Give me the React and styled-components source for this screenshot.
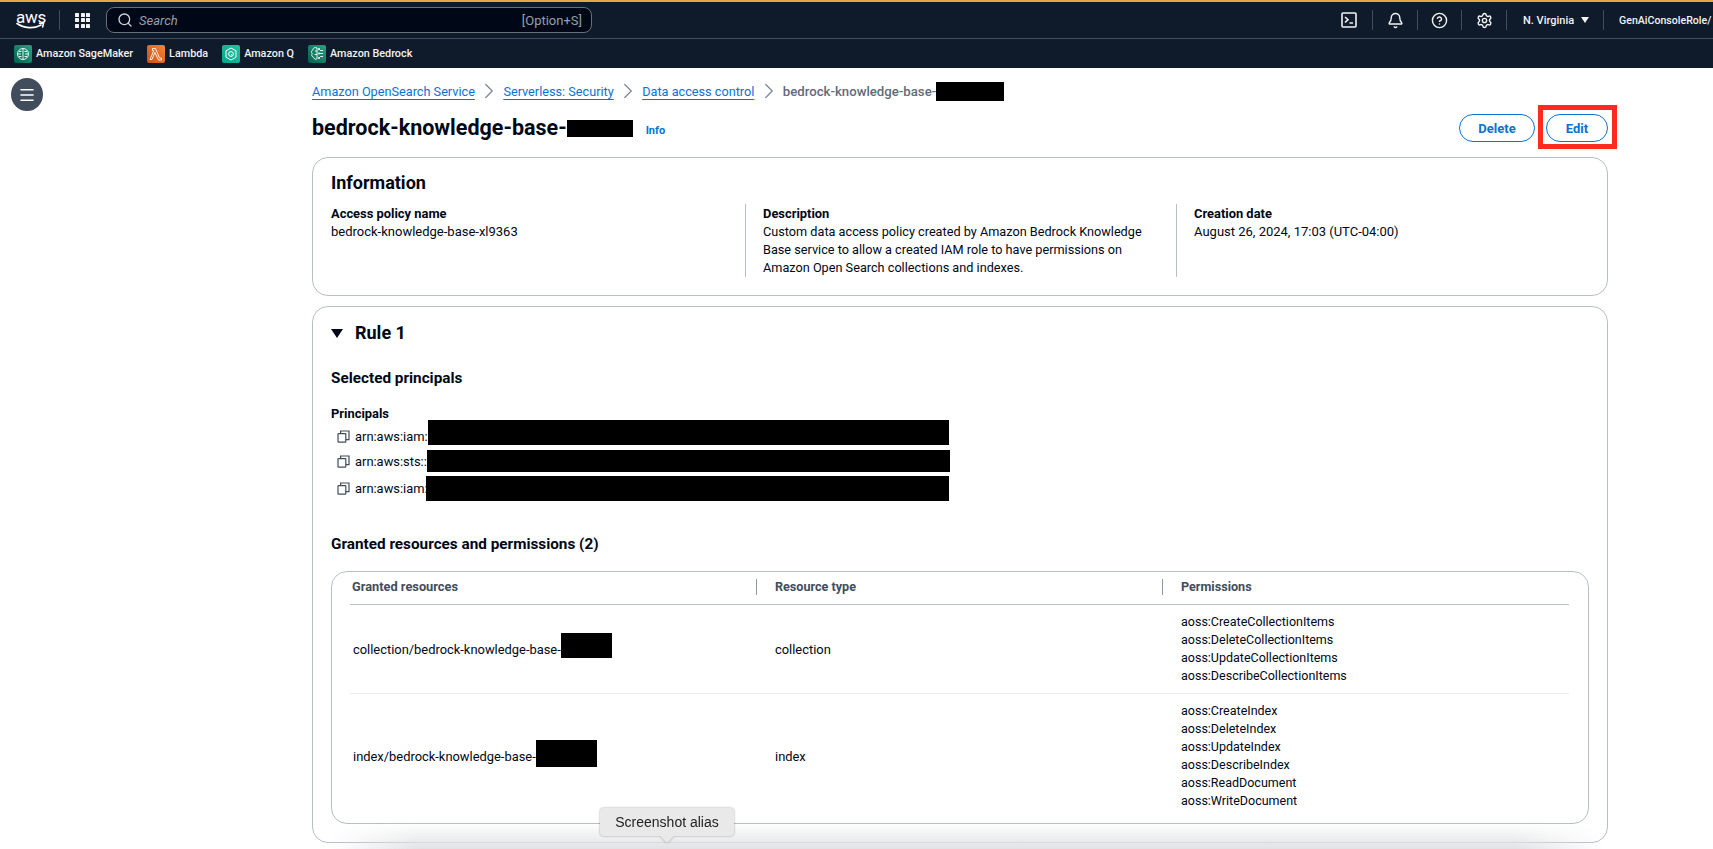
import React from "react";
import styled, { createGlobalStyle } from "styled-components";
import { Bell, CircleHelp, Settings, Search, Menu, ChevronRight } from "lucide-react";

const GlobalStyle = createGlobalStyle`
  html, body {
    margin: 0;
    height: 100%;
    overflow: hidden;
    background: #fff;
  }
  body {
    font-family: Roboto, "Liberation Sans", Arial, sans-serif;
    font-size: 12.9px;
    color: #000716;
  }
`;

const Page = styled.div`
  position: relative;
  width: 1713px;
  height: 849px;
  overflow: hidden;
`;

const TopBar = styled.header`
  height: 38px;
  box-sizing: border-box;
  border-top: 2px solid #e6a54a;
  background: #0f1b2a;
  display: flex;
  align-items: center;
  color: #f2f3f3;
`;
const Logo = styled.div`
  width: 59px;
  box-sizing: border-box;
  padding-left: 16px;
  display: flex;
  flex-direction: column;
  align-items: flex-start;
  line-height: 14px;
  font-size: 17px;
  letter-spacing: -0.2px;
  color: #fff;
  svg { display: block; margin-top: -2px; }
`;
const NavDivider = styled.span`
  width: 1px;
  height: 20px;
  background: #414d5c;
  flex: none;
`;
const GridDots = styled.div`
  display: grid;
  grid-template-columns: repeat(3, 4px);
  grid-auto-rows: 4px;
  gap: 1.5px;
  margin: 0 16px 0 15px;
  span { background: #f2f3f3; border-radius: 0.5px; }
`;
const SearchBox = styled.div`
  width: 486px;
  height: 26px;
  box-sizing: border-box;
  border: 1px solid #687078;
  border-radius: 8px;
  background: #000716;
  display: flex;
  align-items: center;
  padding: 0 9px 0 10px;
  color: #d1d5db;
`;
const SearchText = styled.span`
  font-style: italic;
  font-size: 13px;
  color: #95a0ad;
  margin-left: 6px;
  flex: 1;
`;
const Shortcut = styled.span`
  font-size: 13px;
  color: #95a0ad;
`;
const NavRight = styled.div`
  margin-left: auto;
  display: flex;
  align-items: center;
  width: 387px;
  flex: none;
  white-space: nowrap;
`;
const NavIcon = styled.span`
  width: ${p => p.$w}px;
  flex: none;
  display: flex;
  justify-content: center;
  color: #f2f3f3;
`;
const Region = styled.span`
  display: flex;
  align-items: center;
  gap: 7px;
  width: 96px;
  flex: none;
  box-sizing: border-box;
  padding-left: 16px;
  font-size: 11px;
  font-weight: 500;
`;
const Caret = styled.span`
  width: 0;
  height: 0;
  border-left: 4px solid transparent;
  border-right: 4px solid transparent;
  border-top: 6px solid #f2f3f3;
`;
const Role = styled.span`
  flex: none;
  padding-left: 15px;
  font-size: 10.6px;
  font-weight: 500;
`;

const BookmarkBar = styled.nav`
  height: 30px;
  box-sizing: border-box;
  border-top: 1px solid #414d5c;
  background: #0f1b2a;
  display: flex;
  align-items: center;
  padding-left: 14px;
`;
const Bookmark = styled.a`
  display: flex;
  align-items: center;
  gap: 4px;
  margin-right: 14px;
  font-size: 10.8px;
  font-weight: 500;
  color: #f2f3f3;
  white-space: nowrap;
`;
const ServiceIcon = styled.span`
  width: 18px;
  height: 18px;
  border-radius: 2px;
  background: ${p => p.$bg};
  display: flex;
  align-items: center;
  justify-content: center;
`;

const Body = styled.div`
  display: flex;
`;
const Rail = styled.aside`
  width: 312px;
  flex: none;
  box-sizing: border-box;
  padding: 10px 0 0 11px;
`;
const RailButton = styled.button`
  width: 32px;
  height: 33px;
  border: none;
  padding: 0;
  border-radius: 50%;
  background: #414d5c;
  color: #fff;
  display: flex;
  align-items: center;
  justify-content: center;
`;
const Main = styled.main`
  width: 1296px;
  flex: none;
`;
const Crumbs = styled.div`
  height: 18px;
  margin-top: 14px;
  display: flex;
  align-items: center;
  font-size: 12.7px;
  white-space: nowrap;
`;
const CrumbLink = styled.a`
  color: #0972d3;
  text-decoration: underline;
  text-underline-offset: 3px;
`;
const CrumbSep = styled.span`
  width: 28.5px;
  display: flex;
  justify-content: center;
  color: #7d8998;
`;
const CrumbCurrent = styled.span`
  color: #5f6b7a;
  font-size: 13.2px;
  font-weight: 500;
  display: flex;
  align-items: center;
`;
// black bars that hide account ids in the screenshot
const Redact = styled.span`
  display: inline-block;
  flex: none;
  width: ${p => p.$w}px;
  height: ${p => p.$h}px;
  margin-left: ${p => p.$ml || 0}px;
  margin-bottom: ${p => p.$mb || 0}px;
  background: #000;
  vertical-align: middle;
`;
const TitleRow = styled.div`
  height: 32px;
  margin-top: 12px;
  display: flex;
  align-items: center;
`;
const Title = styled.h1`
  margin: 0;
  font-size: 21.5px;
  font-weight: 700;
  line-height: 30px;
  display: flex;
  align-items: center;
`;
const InfoLink = styled.a`
  margin: 5px 0 0 13px;
  font-size: 11px;
  font-weight: 700;
  color: #0972d3;
`;
const Actions = styled.div`
  margin-left: auto;
  display: flex;
  gap: 11px;
`;
const ActionButton = styled.button`
  width: ${p => p.$w}px;
  height: 28px;
  padding: 0;
  border: 1.5px solid #0972d3;
  border-radius: 16px;
  background: #fff;
  color: #0972d3;
  font-family: inherit;
  font-size: 13px;
  font-weight: 700;
`;
const RedBox = styled.span`
  position: absolute;
  left: 1538px;
  top: 105px;
  width: 79px;
  height: 44px;
  box-sizing: border-box;
  border: 5px solid #ff2a20;
`;

const Card = styled.section`
  box-sizing: border-box;
  margin-top: ${p => p.$mt}px;
  height: ${p => p.$h}px;
  border: 1px solid #b6bec9;
  border-radius: 16px;
  padding: 0 18px;
`;
const CardTitle = styled.h2`
  margin: 14px 0 0;
  font-size: 18px;
  font-weight: 700;
  line-height: 22px;
`;
const InfoGrid = styled.div`
  margin-top: 10px;
  display: grid;
  grid-template-columns: 414px 431px 1fr;
`;
const InfoCol = styled.div`
  height: 73px;
  padding-top: 1px;
  box-sizing: border-box;
  line-height: 18px;
  font-size: ${p => p.$size}px;
  ${p => p.$rule && `
    border-left: 1px solid #b6bec9;
    padding-left: 17px;
  `}
`;
const FieldLabel = styled.div`
  margin-top: ${p => p.$mt || 0}px;
  font-size: 12.9px;
  font-weight: 700;
  line-height: 18px;
`;
const RuleHead = styled.div`
  margin-top: 15px;
  display: flex;
  align-items: center;
  font-size: 18px;
  font-weight: 700;
  line-height: 22px;
  gap: 12px;
`;
const Triangle = styled.span`
  width: 0;
  height: 0;
  border-left: 6.5px solid transparent;
  border-right: 6.5px solid transparent;
  border-top: 9px solid #000716;
`;
const Subhead = styled.h3`
  margin: ${p => p.$mt}px 0 0;
  font-size: 15.3px;
  font-weight: 700;
  line-height: 20px;
`;
const PrincipalList = styled.div`
  margin-top: 1px;
`;
const PrincipalRow = styled.div`
  height: ${p => p.$h}px;
  display: flex;
  align-items: center;
  padding-left: 6px;
  white-space: nowrap;
  svg { margin-right: 5px; flex: none; }
`;
const TableBox = styled.div`
  box-sizing: border-box;
  margin-top: 17px;
  height: 253px;
  border: 1px solid #b6bec9;
  border-radius: 16px;
  padding: 0 19px 0 18px;
`;
const ResourceRow = styled.div`
  display: grid;
  grid-template-columns: 406px 406px 1fr;
  box-sizing: border-box;
  height: ${p => p.$h}px;
  padding-bottom: ${p => p.$pb || 0}px;
  align-items: center;
  border-bottom: ${p => p.$line || "none"};
`;
const HeadCell = styled.div`
  height: 16px;
  line-height: 16px;
  font-size: 12.8px;
  font-weight: 700;
  color: #414d5c;
  padding-left: 2px;
  ${p => p.$rule && `
    border-left: 1px solid #8c97a5;
    padding-left: 18px;
    font-size: 12.6px;
  `}
`;
const Cell = styled.div`
  padding-left: ${p => p.$pl}px;
  display: flex;
  align-items: center;
  white-space: nowrap;
`;
const PermList = styled.div`
  font-size: 12.5px;
  line-height: 18px;
`;
const BottomFade = styled.div`
  position: absolute;
  left: 330px;
  right: 110px;
  bottom: 0;
  height: 26px;
  background: linear-gradient(rgba(225, 226, 228, 0), rgba(225, 226, 228, 1));
  mask-image: linear-gradient(to right, transparent, #000 7%, #000 93%, transparent);
  pointer-events: none;
`;
const Tooltip = styled.div`
  position: absolute;
  left: 600px;
  top: 808px;
  width: 134px;
  height: 28px;
  border-radius: 4px;
  background: #e9e9e9;
  filter: drop-shadow(0 0 1px rgba(0, 0, 0, 0.35));
  display: flex;
  align-items: center;
  justify-content: center;
  font-family: "Liberation Sans", Arial, sans-serif;
  font-size: 14px;
  color: #222;
  &::after {
    content: "";
    position: absolute;
    left: 60px;
    bottom: -7px;
    border-left: 7px solid transparent;
    border-right: 7px solid transparent;
    border-top: 7px solid #e9e9e9;
  }
`;

const AwsLogo = () => (
  <Logo>
    aws
    <svg width="29" height="9" viewBox="0 0 29 9" fill="none">
      <path d="M1 1.5C8 6.5 18 7 25 3" stroke="#fff" strokeWidth="1.6" strokeLinecap="round" />
      <path d="M23.5 1.2L27.6 1L26.6 5" stroke="#fff" strokeWidth="1.5" strokeLinecap="round" />
    </svg>
  </Logo>
);

const TerminalIcon = () => (
  <svg width="16" height="16" viewBox="0 0 16 16" fill="none" stroke="#f2f3f3" strokeWidth="1.6">
    <rect x="1" y="1" width="14" height="14" rx="1" />
    <path d="M4 5l3 2.7L4 10.5M8.5 11H12" />
  </svg>
);

const CopyIcon = () => (
  <svg width="13" height="13" viewBox="0 0 13 13" fill="none" stroke="#414d5c" strokeWidth="1.2">
    <rect x="1" y="3.6" width="7.8" height="8.6" rx="0.6" />
    <path d="M3.6 3.6V1h8.4v8.6H8.8" />
  </svg>
);

// small line drawings inside the coloured service squares
const BrainGlyph = () => (
  <svg width="14" height="14" viewBox="0 0 14 14" fill="none" stroke="#fff" strokeWidth="0.9">
    <circle cx="7" cy="7" r="5.5" />
    <path d="M7 1.5v11M3 4.5h2.5M3 9.5h2.5M8.5 4.5H11M8.5 9.5H11M2 7h3M9 7h3" />
  </svg>
);
const LambdaGlyph = () => (
  <svg width="14" height="14" viewBox="0 0 14 14" fill="none" stroke="#fff" strokeWidth="0.9" strokeLinejoin="round">
    <path d="M3.5 1.5h3l4 9.5H12.5v2h-3L5.8 5.5 3 12.5H1L4.8 3.5H3.5z" />
  </svg>
);
const QGlyph = () => (
  <svg width="14" height="14" viewBox="0 0 14 14" fill="none" stroke="#fff" strokeWidth="1">
    <path d="M7 1l5 2.8v6.4L7 13l-5-2.8V3.8z" />
    <circle cx="7" cy="7" r="2.4" />
    <path d="M7 7l1.6 2" />
  </svg>
);
const BedrockGlyph = () => (
  <svg width="15" height="15" viewBox="0 0 15 15" fill="none" stroke="#fff" strokeWidth="0.9">
    <path d="M7 2C5 .8 3 2 3 3.6 1.4 4.4 1 6.4 2.2 7.5 1.2 9 2 11 3.5 11.2 4 13 6 14 7 12.8z" />
    <path d="M7 5H5M7 8.5H4.5M9 3l1.5 1.5H13M9 7.5h4M9 12l1.5-1.5H13" />
    <circle cx="9" cy="3" r=".7" />
    <circle cx="9" cy="7.5" r=".7" />
    <circle cx="9" cy="12" r=".7" />
  </svg>
);

const bookmarks = [
  { name: "Amazon SageMaker", bg: "linear-gradient(45deg, #055f4e, #27a583)", glyph: <BrainGlyph /> },
  { name: "Lambda", bg: "linear-gradient(45deg, #c8511b, #f58534)", glyph: <LambdaGlyph /> },
  { name: "Amazon Q", bg: "linear-gradient(45deg, #01a88d, #25c1a1)", glyph: <QGlyph /> },
  { name: "Amazon Bedrock", bg: "linear-gradient(45deg, #055f4e, #27a583)", glyph: <BedrockGlyph /> },
];

const collectionPerms = [
  "aoss:CreateCollectionItems",
  "aoss:DeleteCollectionItems",
  "aoss:UpdateCollectionItems",
  "aoss:DescribeCollectionItems",
];
const indexPerms = [
  "aoss:CreateIndex",
  "aoss:DeleteIndex",
  "aoss:UpdateIndex",
  "aoss:DescribeIndex",
  "aoss:ReadDocument",
  "aoss:WriteDocument",
];

const principals = [
  { arn: "arn:aws:iam::", h: 24, w: 521, rh: 25, ml: -3, mb: 8 },
  { arn: "arn:aws:sts::6", h: 27, w: 523, rh: 22, ml: -7, mb: 2 },
  { arn: "arn:aws:iam:", h: 27, w: 523, rh: 25, ml: -2, mb: 0 },
];

const Sep = () => (
  <CrumbSep>
    <ChevronRight size={26} strokeWidth={1.2} />
  </CrumbSep>
);

const App = () => {
  return (
    <Page>
      <GlobalStyle />
      <TopBar>
        <AwsLogo />
        <NavDivider />
        <GridDots>
          {Array.from({ length: 9 }).map((_, i) => (
            <span key={i} />
          ))}
        </GridDots>
        <SearchBox>
          <Search size={16} strokeWidth={2} />
          <SearchText>Search</SearchText>
          <Shortcut>[Option+S]</Shortcut>
        </SearchBox>
        <NavRight>
          <NavIcon $w={46}>
            <TerminalIcon />
          </NavIcon>
          <NavDivider />
          <NavIcon $w={44}>
            <Bell size={17} strokeWidth={2} />
          </NavIcon>
          <NavDivider />
          <NavIcon $w={43}>
            <CircleHelp size={17} strokeWidth={2} />
          </NavIcon>
          <NavDivider />
          <NavIcon $w={44}>
            <Settings size={17} strokeWidth={2} />
          </NavIcon>
          <NavDivider />
          <Region>
            N. Virginia <Caret />
          </Region>
          <NavDivider />
          <Role>GenAiConsoleRole/</Role>
        </NavRight>
      </TopBar>
      <BookmarkBar>
        {bookmarks.map(b => (
          <Bookmark key={b.name}>
            <ServiceIcon $bg={b.bg}>{b.glyph}</ServiceIcon>
            {b.name}
          </Bookmark>
        ))}
      </BookmarkBar>
      <Body>
        <Rail>
          <RailButton aria-label='Open navigation'>
            <Menu size={18} strokeWidth={2.2} />
          </RailButton>
        </Rail>
        <Main>
          <Crumbs>
            <CrumbLink>Amazon OpenSearch Service</CrumbLink>
            <Sep />
            <CrumbLink>Serverless: Security</CrumbLink>
            <Sep />
            <CrumbLink>Data access control</CrumbLink>
            <Sep />
            <CrumbCurrent>
              bedrock-knowledge-base-
              <Redact $w={68} $h={19} />
            </CrumbCurrent>
          </Crumbs>
          <TitleRow>
            <Title>
              bedrock-knowledge-base-
              <Redact $w={66} $h={17} />
            </Title>
            <InfoLink>Info</InfoLink>
            <Actions>
              <ActionButton $w={76}>Delete</ActionButton>
              <ActionButton $w={62}>Edit</ActionButton>
            </Actions>
          </TitleRow>
          <Card $mt={13} $h={139}>
            <CardTitle>Information</CardTitle>
            <InfoGrid>
              <InfoCol $size={13}>
                <FieldLabel>Access policy name</FieldLabel>
                bedrock-knowledge-base-xl9363
              </InfoCol>
              <InfoCol $rule $size={12.7}>
                <FieldLabel>Description</FieldLabel>
                Custom data access policy created by Amazon Bedrock Knowledge
                <br />
                Base service to allow a created IAM role to have permissions on
                <br />
                Amazon Open Search collections and indexes.
              </InfoCol>
              <InfoCol $rule $size={13}>
                <FieldLabel>Creation date</FieldLabel>
                August 26, 2024, 17:03 (UTC-04:00)
              </InfoCol>
            </InfoGrid>
          </Card>
          <Card $mt={10} $h={537}>
            <RuleHead>
              <Triangle />
              Rule 1
            </RuleHead>
            <Subhead $mt={24}>Selected principals</Subhead>
            <FieldLabel $mt={17}>Principals</FieldLabel>
            <PrincipalList>
              {principals.map(p => (
                <PrincipalRow key={p.arn} $h={p.h}>
                  <CopyIcon />
                  {p.arn}
                  <Redact $w={p.w} $h={p.rh} $ml={p.ml} $mb={p.mb} />
                </PrincipalRow>
              ))}
            </PrincipalList>
            <Subhead $mt={32}>Granted resources and permissions (2)</Subhead>
            <TableBox>
              <ResourceRow $h={33} $pb={3} $line='1px solid #b6bec9'>
                <HeadCell>Granted resources</HeadCell>
                <HeadCell $rule>Resource type</HeadCell>
                <HeadCell $rule>Permissions</HeadCell>
              </ResourceRow>
              <ResourceRow $h={89} $line='1px solid #e9ebed'>
                <Cell $pl={3}>
                  collection/bedrock-knowledge-base-
                  <Redact $w={51} $h={25} $mb={8} />
                </Cell>
                <Cell $pl={19}>collection</Cell>
                <Cell $pl={19}>
                  <PermList>
                    {collectionPerms.map(x => (
                      <div key={x}>{x}</div>
                    ))}
                  </PermList>
                </Cell>
              </ResourceRow>
              <ResourceRow $h={128} $pb={4}>
                <Cell $pl={3}>
                  index/bedrock-knowledge-base-
                  <Redact $w={61} $h={27} $mb={5} />
                </Cell>
                <Cell $pl={19}>index</Cell>
                <Cell $pl={19}>
                  <PermList>
                    {indexPerms.map(x => (
                      <div key={x}>{x}</div>
                    ))}
                  </PermList>
                </Cell>
              </ResourceRow>
            </TableBox>
          </Card>
        </Main>
      </Body>
      <RedBox />
      <BottomFade />
      <Tooltip>Screenshot alias</Tooltip>
    </Page>
  );
};

export default App;
